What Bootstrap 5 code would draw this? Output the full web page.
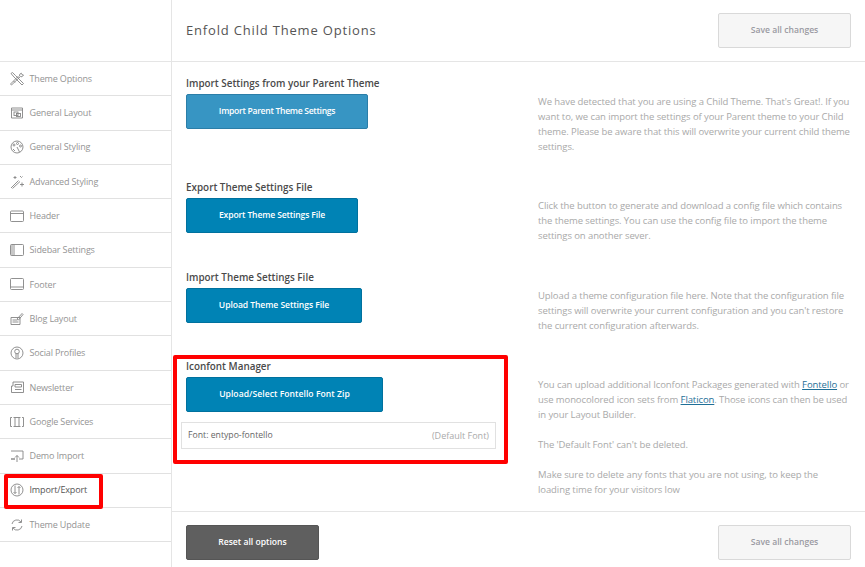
<!DOCTYPE html>
<html lang="en">
<head>
<meta charset="utf-8">
<title>Enfold Child Theme Options</title>
<link href="https://cdn.jsdelivr.net/npm/bootstrap@5.3.0/dist/css/bootstrap.min.css" rel="stylesheet">
<style>
html,body{margin:0;height:567px;overflow:hidden;background:#fff}
body{font-family:"Open Sans","Liberation Sans",sans-serif;font-size:11px;color:#444}
.shell{height:567px;position:relative}
.side{width:172px;flex:none;border-right:1px solid #e5e5e5;padding-top:61px}
.side-list{border-top:1px solid #e5e5e5}
.side-item{height:34.3px;border-bottom:1px solid #e1e1e1;padding-left:10px;gap:5.5px;color:#949494;font-size:9px;letter-spacing:-.15px;display:flex;align-items:center}
.side-item.on{color:#555}
.side-item svg{width:14px;height:14px;flex:none;fill:none;stroke:#858585;stroke-width:.9}
.main-col{min-width:0}
.top-bar{height:62px;border-bottom:1px solid #e5e5e5;padding:13px 14px 0 14px}
.page-title{font-size:13px;letter-spacing:.82px;color:#555;margin:0;font-weight:400;line-height:35px}
.save-btn{width:133px;height:35px;background:#f6f6f6;border:1px solid #d9d9d9;border-radius:2px;color:#9a9aa2;font-size:8.6px;font-weight:600;padding:0 0 1px}
.body-area{height:449px;padding:14px 14px 0 14px}
.opt-left{width:352px;flex:none}
.opt-right{width:313px;flex:none;font-size:9.5px;letter-spacing:-.09px;line-height:15px;color:#a9a9a9;padding-top:18px}
.opt-right p{margin:0 0 15px}
.opt-right a{color:#1f6f97}
.opt-title{font-size:9.9px;font-weight:600;color:#4a4a4a;line-height:14px;margin-bottom:4px}
.act-btn{height:35px;display:block;background:#0083b5;border:1px solid #00719e;border-radius:2px;color:#fff;font-size:8.6px;font-weight:600;padding:0 0 1px}
.act-btn.soft{background:#3795c3;border-color:#2b7ea8}
.w-a{width:182px;letter-spacing:-.3px}.w-b{width:172px;letter-spacing:-.15px}.w-c{width:176px;letter-spacing:-.08px}.w-d{width:197px;letter-spacing:.04px}
.sec-a{height:104px}.sec-b{height:90px}.sec-c{height:89px}
.font-box{margin:10px 0 0 -5px;width:315px;height:27px;border:1px solid #e1e1e1;padding:0 6px;font-size:8.7px;color:#666}
.font-box span:last-child{color:#aaa;font-size:9px}
.foot-bar{height:56px;border-top:1px solid #e5e5e5;padding:13px 14px 0 14px}
.reset-btn{width:133px;height:35px;background:#5f5f5f;border:1px solid #555;border-radius:2px;color:#fff;font-size:8.6px;font-weight:600;padding:0 0 1px}
.mark-a,.mark-b{position:absolute;border:4px solid #f00;border-radius:2px;pointer-events:none}
.mark-a{left:173px;top:355px;width:335px;height:109px}
.mark-b{left:4px;top:474px;width:99px;height:35px}
</style>
</head>
<body>
<div class="shell d-flex">
  <nav class="side">
    <div class="side-list">
      <div class="side-item"><svg viewBox="0 0 14 14"><path d="M1.500 13l-1-1L8 4.500l1.200 1.200zM1 1.500L2.500.5l3 3L13.500 11.500 12 13 4 5 1 1.500zM8.500 6l2-1.500 1.500.3 1.500-1.800-1.500-.3-.7-1.500-1.500 1-.3 1.800M3.500 9l1.500 1.500"/></svg>Theme Options</div>
      <div class="side-item"><svg viewBox="0 0 14 14"><path d="M1.500 2h11v10h-11zM1.500 4h11"/><rect x="4" y="6" width="4" height="3.500"/><rect x="6.500" y="7.500" width="4" height="3"/></svg>General Layout</div>
      <div class="side-item"><svg viewBox="0 0 14 14"><circle cx="7" cy="7" r="6"/><circle cx="4" cy="5" r="1"/><circle cx="7.500" cy="3.500" r="1"/><circle cx="10.500" cy="6" r="1"/><path d="M7 7l2.500 5M3 9l2 2"/></svg>General Styling</div>
      <div class="side-item"><svg viewBox="0 0 14 14"><path d="M1 13L8.500 5.500M2.500 13.500L10 6.500M5 1v3M3.500 2.500h3M12 7.500v4M10 9.500h4M10 1l1.500 1.500 1-1"/></svg>Advanced Styling</div>
      <div class="side-item"><svg viewBox="0 0 14 14"><rect x=".5" y="2" width="13" height="10.500" rx="1"/><path d="M.5 4.500h13"/></svg>Header</div>
      <div class="side-item"><svg viewBox="0 0 14 14"><rect x=".5" y="1.500" width="13" height="11" rx="1"/><path d="M4 1.500v11M2 1.500v11"/></svg>Sidebar Settings</div>
      <div class="side-item"><svg viewBox="0 0 14 14"><rect x=".5" y="1.500" width="13" height="11" rx="1"/><path d="M.5 10h13"/></svg>Footer</div>
      <div class="side-item"><svg viewBox="0 0 14 14"><path d="M1 5.500h9v7H1zM2.500 8h5M2.500 10h6M7 7l5-5.500 1 1L8.500 8z"/></svg>Blog Layout</div>
      <div class="side-item"><svg viewBox="0 0 14 14"><circle cx="7" cy="7" r="6"/><circle cx="7" cy="5.500" r="2.300"/><path d="M6 7.500V12M8 7.500V12"/></svg>Social Profiles</div>
      <div class="side-item"><svg viewBox="0 0 14 14"><path d="M3 2h10.500v10.500H1.500V6H3zM5 4.500h6.500v2.500H5zM5 9.500h6.500"/></svg>Newsletter</div>
      <div class="side-item"><svg viewBox="0 0 14 14"><path d="M2 2.500H.5v9H2M12 2.500h1.500v9H12M5 2.500v9M9 2.500v9M3.500 2.500h7M3.500 11.500h7"/></svg>Google Services</div>
      <div class="side-item"><svg viewBox="0 0 14 14"><path d="M1 2h12v8H9M5 10H1zM7 13V6.500M5 8.500l2-2 2 2"/></svg>Demo Import</div>
      <div class="side-item on"><svg viewBox="0 0 14 14"><circle cx="7" cy="7" r="6"/><path d="M5 2.500v8M3.500 9l1.500 1.500L6.500 9M9 11.500v-8M7.500 5L9 3.500 10.500 5"/></svg>Import/Export</div>
      <div class="side-item"><svg viewBox="0 0 14 14"><path d="M2 6a5 5 0 0 1 9-2M12 8a5 5 0 0 1-9 2M11.500 1.500V4.500H8.500M2.500 12.500V9.500h3"/></svg>Theme Update</div>
    </div>
  </nav>
  <main class="main-col flex-grow-1 d-flex flex-column">
    <header class="top-bar d-flex justify-content-between align-items-start">
      <h1 class="page-title">Enfold Child Theme Options</h1>
      <button class="save-btn" type="button">Save all changes</button>
    </header>
    <section class="body-area">
      <div class="d-flex sec-a">
        <div class="opt-left"><div class="opt-title">Import Settings from your Parent Theme</div><button class="act-btn soft w-a" type="button">Import Parent Theme Settings</button></div>
        <div class="opt-right"><p>We have detected that you are using a Child Theme. That's Great!. If you want to, we can import the settings of your Parent theme to your Child theme. Please be aware that this will overwrite your current child theme settings.</p></div>
      </div>
      <div class="d-flex sec-b">
        <div class="opt-left"><div class="opt-title">Export Theme Settings File</div><button class="act-btn w-b" type="button">Export Theme Settings File</button></div>
        <div class="opt-right"><p>Click the button to generate and download a config file which contains the theme settings. You can use the config file to import the theme settings on another sever.</p></div>
      </div>
      <div class="d-flex sec-c">
        <div class="opt-left"><div class="opt-title">Import Theme Settings File</div><button class="act-btn w-c" type="button">Upload Theme Settings File</button></div>
        <div class="opt-right"><p>Upload a theme configuration file here. Note that the configuration file settings will overwrite your current configuration and you can't restore the current configuration afterwards.</p></div>
      </div>
      <div class="d-flex">
        <div class="opt-left"><div class="opt-title">Iconfont Manager</div><button class="act-btn w-d" type="button">Upload/Select Fontello Font Zip</button>
          <div class="font-box d-flex justify-content-between align-items-center"><span>Font: entypo-fontello</span><span>(Default Font)</span></div>
        </div>
        <div class="opt-right"><p>You can upload additional Iconfont Packages generated with <a href="#">Fontello</a> or use monocolored icon sets from <a href="#">Flaticon</a>. Those icons can then be used in your Layout Builder.</p><p>The 'Default Font' can't be deleted.</p><p>Make sure to delete any fonts that you are not using, to keep the loading time for your visitors low</p></div>
      </div>
    </section>
    <footer class="foot-bar d-flex justify-content-between align-items-start">
      <button class="reset-btn" type="button">Reset all options</button>
      <button class="save-btn" type="button">Save all changes</button>
    </footer>
  </main>
  <div class="mark-a"></div>
  <div class="mark-b"></div>
</div>
<script src="https://cdn.jsdelivr.net/npm/bootstrap@5.3.0/dist/js/bootstrap.bundle.min.js"></script>
</body>
</html>
